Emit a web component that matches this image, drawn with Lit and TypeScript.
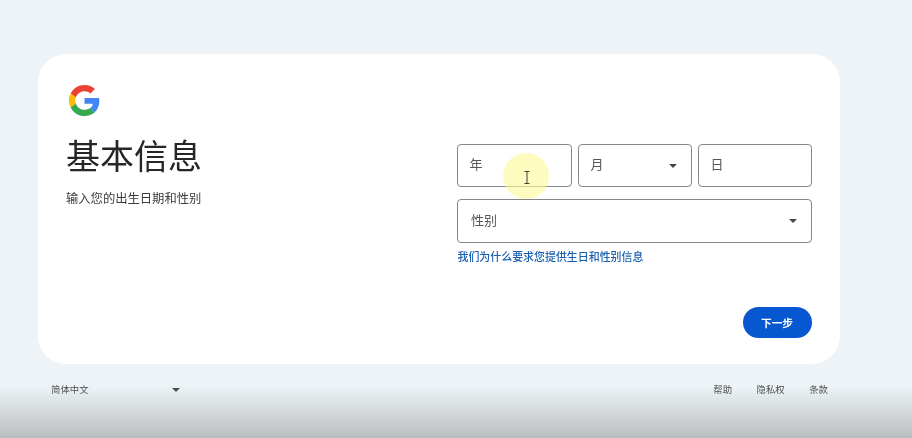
import { LitElement, html, css } from "lit";
import { customElement } from "lit/decorators.js";

const caret = html`<span class="caret"></span>`;

@customElement("app-root")
export class AppRoot extends LitElement {
  static styles = css`
    :host {
      display: block;
      position: relative;
      width: 912px;
      height: 438px;
      overflow: hidden;
      background: #edf3f6;
      font-family: Roboto, "Noto Sans CJK SC", sans-serif;
      color: #1f1f1f;
    }
    .page {
      display: flex;
      flex-direction: column;
      padding: 54px 72px 0 38px;
      filter: blur(0.35px);
    }
    .card {
      height: 310px;
      box-sizing: border-box;
      background: #fff;
      border-radius: 28px;
      padding: 31px 28px 26px 28px;
      display: flex;
      flex-direction: column;
    }
    .logo {
      display: block;
      width: 31px;
      height: 31px;
      margin-left: 3px;
    }
    .main {
      display: grid;
      grid-template-columns: 391px 355px;
      flex: 1;
    }
    .left {
      display: flex;
      flex-direction: column;
    }
    h1 {
      margin: 17px 0 0 0;
      font-size: 34px;
      line-height: 48px;
      font-weight: 400;
      color: #262626;
    }
    .sub {
      margin: 9px 0 0 0;
      font-size: 12.3px;
      line-height: 18px;
      color: #3c3c3c;
    }
    .right {
      display: flex;
      flex-direction: column;
      padding-top: 28px;
    }
    .row {
      display: grid;
      grid-template-columns: 115px 114px 114px;
      gap: 6px;
    }
    .field {
      box-sizing: border-box;
      height: 43px;
      border: 1px solid #85878a;
      border-radius: 4px;
      display: flex;
      align-items: center;
      justify-content: space-between;
      padding: 0 14px 4px 11.5px;
      font-size: 13px;
      color: #555857;
    }
    .field.wide {
      height: 44px;
      margin-top: 12px;
      padding: 0 14px 4px 13px;
    }
    .caret {
      width: 0;
      height: 0;
      border-left: 4.5px solid transparent;
      border-right: 4.5px solid transparent;
      border-top: 4px solid #444746;
      margin-top: 4px;
    }
    .link {
      margin-top: 7px;
      padding-left: 0.5px;
      font-size: 10.95px;
      line-height: 16px;
      font-weight: 500;
      color: #1a5fb0;
    }
    .actions {
      margin-top: auto;
      display: flex;
      justify-content: flex-end;
    }
    .next {
      box-sizing: border-box;
      width: 69px;
      height: 31px;
      border: none;
      border-radius: 16px;
      background: #0657d0;
      color: #fff;
      font: 700 10.7px Roboto, "Noto Sans CJK SC", sans-serif;
      padding: 0 1px 0 0;
    }
    .footer {
      display: flex;
      justify-content: space-between;
      align-items: center;
      height: 17px;
      margin-top: 16px;
      padding: 0 12px 0 13px;
      font-size: 9.4px;
      color: #45484b;
    }
    .lang {
      display: flex;
      align-items: center;
      justify-content: space-between;
      width: 129px;
    }
    .lang .caret {
      border-left-width: 4px;
      border-right-width: 4px;
      border-top-width: 4px;
      margin-top: 2px;
    }
    .links {
      display: flex;
      gap: 24.5px;
    }
    .shade {
      position: absolute;
      left: 0;
      right: 0;
      bottom: 0;
      height: 52px;
      pointer-events: none;
      background: linear-gradient(to bottom, rgba(184, 187, 190, 0), rgba(184, 187, 190, 0.95));
    }
    .spot {
      position: absolute;
      left: 503px;
      top: 153px;
      width: 46px;
      height: 46px;
      border-radius: 50%;
      background: rgba(253, 249, 150, 0.62);
      pointer-events: none;
    }
    .beam {
      position: absolute;
      left: 523px;
      top: 171px;
      width: 8px;
      height: 13px;
      pointer-events: none;
    }
  `;

  render() {
    return html`
      <div class="page">
        <section class="card">
          <svg class="logo" viewBox="0 0 48 48" aria-label="Google">
            <path fill="#EA4335" d="M24 9.5c3.54 0 6.71 1.22 9.21 3.6l6.85-6.85C35.9 2.38 30.47 0 24 0 14.62 0 6.51 5.38 2.56 13.22l7.98 6.19C12.43 13.72 17.74 9.5 24 9.5z"/>
            <path fill="#4285F4" d="M46.98 24.55c0-1.57-.15-3.09-.38-4.55H24v9.02h12.94c-.58 2.96-2.26 5.48-4.78 7.18l7.73 6c4.51-4.18 7.09-10.36 7.09-17.65z"/>
            <path fill="#FBBC05" d="M10.53 28.59c-.48-1.45-.76-2.99-.76-4.59s.27-3.14.76-4.59l-7.98-6.19C.92 16.46 0 20.12 0 24c0 3.88.92 7.54 2.56 10.78l7.97-6.19z"/>
            <path fill="#34A853" d="M24 48c6.48 0 11.93-2.13 15.89-5.81l-7.73-6c-2.15 1.45-4.92 2.3-8.16 2.3-6.26 0-11.57-4.22-13.47-9.91l-7.98 6.19C6.51 42.62 14.62 48 24 48z"/>
          </svg>
          <div class="main">
            <div class="left">
              <h1>基本信息</h1>
              <p class="sub">输入您的出生日期和性别</p>
            </div>
            <div class="right">
              <div class="row">
                <div class="field"><span>年</span></div>
                <div class="field"><span>月</span>${caret}</div>
                <div class="field"><span>日</span></div>
              </div>
              <div class="field wide"><span>性别</span>${caret}</div>
              <div class="link">我们为什么要求您提供生日和性别信息</div>
            </div>
          </div>
          <div class="actions"><button class="next">下一步</button></div>
        </section>
        <footer class="footer">
          <div class="lang"><span>简体中文</span>${caret}</div>
          <div class="links"><span>帮助</span><span>隐私权</span><span>条款</span></div>
        </footer>
      </div>
      <div class="spot"></div>
      <svg class="beam" viewBox="0 0 8 13" fill="none" stroke="#3f3f3f" stroke-width="1">
        <path d="M1.5 .5h5M4 .5v12M1.5 12.5h5"/>
      </svg>
      <div class="shade"></div>
    `;
  }
}
